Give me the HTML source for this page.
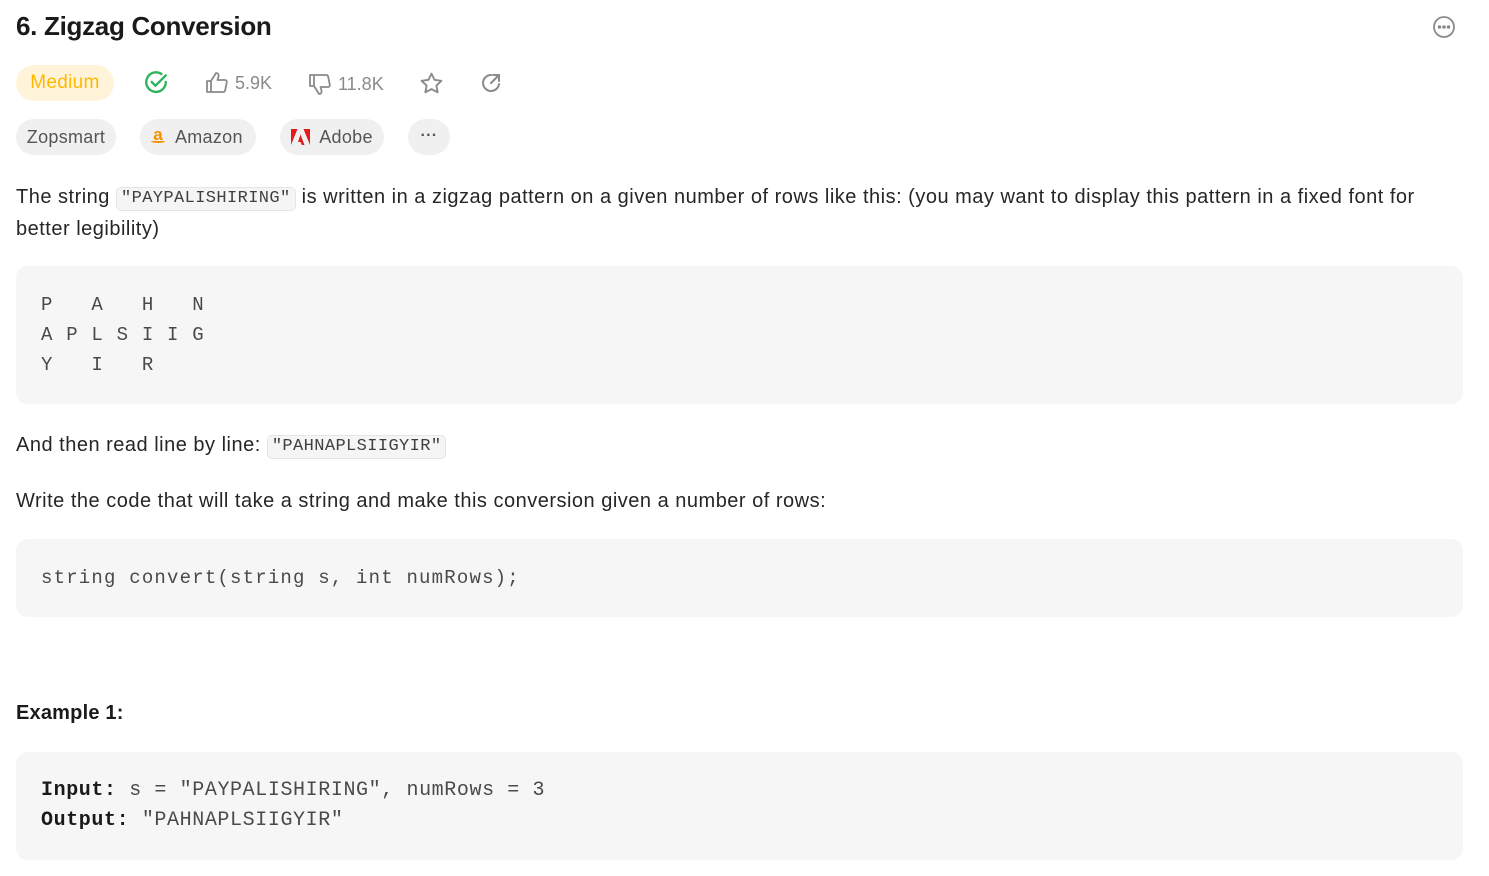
<!DOCTYPE html>
<html><head><meta charset="utf-8"><style>
*{box-sizing:border-box;margin:0;padding:0}
body{width:1489px;height:876px;overflow:hidden;background:#fff;font-family:"Liberation Sans",sans-serif;color:#262626;position:relative}
.abs{position:absolute}
h1{position:absolute;left:16px;top:11px;font-size:26px;font-weight:600;color:#1a1a1a;letter-spacing:-0.3px}
.pill{position:absolute;height:36px;border-radius:18px;background:#f0f0f0;display:flex;align-items:center;justify-content:center;font-size:18px;color:#555;letter-spacing:0.3px}
.stat{position:absolute;display:flex;align-items:center;gap:6px;font-size:18px;color:#8a8a8a}
p{position:absolute;left:16px;width:1430px;font-size:20px;line-height:32px;color:#262626;letter-spacing:0.5px}
code{font-family:"Liberation Mono",monospace;font-size:17px;line-height:20px;display:inline-block;background:#f5f5f5;border:1px solid #e5e5e5;border-radius:5px;padding:1px 4px;color:#404040;letter-spacing:0.4px;vertical-align:1px}
.blk{position:absolute;left:16px;width:1447px;background:#f6f6f6;border-radius:12px;padding-left:25px;font-family:"Liberation Mono",monospace;color:#4a4a4a;white-space:pre}
</style></head><body>
<h1>6. Zigzag Conversion</h1>
<svg class="abs" style="left:1432px;top:15px" width="24" height="24" viewBox="0 0 24 24" fill="none" stroke="#8a8a8a" stroke-width="1.8"><circle cx="12" cy="12" r="10"/><circle cx="7.5" cy="12" r=".9" fill="#8a8a8a"/><circle cx="12" cy="12" r=".9" fill="#8a8a8a"/><circle cx="16.5" cy="12" r=".9" fill="#8a8a8a"/></svg>

<div class="pill" style="left:16px;top:65px;width:98px;background:#fff4d9;color:#ffb800;font-size:19px">Medium</div>
<svg class="abs" style="left:143px;top:70px" width="26" height="26" viewBox="0 0 24 24" fill="none" stroke="#2db55d" stroke-width="2.2" stroke-linecap="round" stroke-linejoin="round"><path d="M21 11a9 9 0 1 1-4-7.3"/><path d="M8 11l3.5 3.5L21 5"/></svg>
<div class="stat" style="left:205px;top:71px"><svg width="24" height="24" viewBox="0 0 24 24" fill="none" stroke="#8a8a8a" stroke-width="1.8" stroke-linejoin="round"><path d="M2 10h4v11H2z"/><path d="M6 10l5-8c2 0 3 1.5 2.5 3.5L12.5 9H20c1.3 0 2 1 1.8 2.2l-1.6 8c-.2 1-1 1.8-2 1.8H6"/></svg>5.9K</div>
<div class="stat" style="left:308px;top:72px"><svg width="24" height="24" viewBox="0 0 24 24" fill="none" stroke="#8a8a8a" stroke-width="1.8" stroke-linejoin="round"><path d="M2 3h4v11H2z"/><path d="M6 14l5 8c2 0 3-1.5 2.5-3.5L12.5 15H20c1.3 0 2-1 1.8-2.2l-1.6-8C20 3.8 19.2 3 18.2 3H6"/></svg>11.8K</div>
<svg class="abs" style="left:419px;top:71px" width="25" height="25" viewBox="0 0 24 24" fill="none" stroke="#8a8a8a" stroke-width="1.8" stroke-linejoin="round"><path d="M12 2.5l2.9 6 6.6.9-4.8 4.6 1.2 6.5L12 17.4l-5.9 3.1 1.2-6.5L2.5 9.4l6.6-.9z"/></svg>
<svg class="abs" style="left:479px;top:71px" width="24" height="24" viewBox="0 0 24 24" fill="none" stroke="#8a8a8a" stroke-width="2" stroke-linecap="round"><path d="M20 13a8 8 0 1 1-8-9"/><path d="M14 4h6v6M20 4l-8 8"/></svg>

<div class="pill" style="left:16px;top:119px;width:100px">Zopsmart</div>
<div class="pill" style="left:140px;top:119px;width:116px;gap:12px"><span style="position:relative;color:#f29100;font-size:17px;font-weight:bold;top:-2px">a<span style="position:absolute;left:-2px;top:14px;width:14px;height:4px;border-bottom:2px solid #f29100;border-radius:0 0 50% 50%"></span></span>Amazon</div>
<div class="pill" style="left:280px;top:119px;width:104px;gap:9px"><svg width="19" height="16" viewBox="0 0 19 16"><path d="M0 0h6.5L0 16zM12.5 0H19v16zM9.5 5.5l4 10.5h-2.7l-1.2-3H7z" fill="#e21b1b"/></svg>Adobe</div>
<div class="pill" style="left:408px;top:119px;width:42px;font-weight:bold;font-size:16px;padding-bottom:2px">···</div>

<p style="top:181px">The string <code>"PAYPALISHIRING"</code> is written in a zigzag pattern on a given number of rows like this: (you may want to display this pattern in a fixed font for better legibility)</p>
<div class="blk" style="top:266px;height:138px;padding-top:24px;font-size:19px;line-height:30px;letter-spacing:1.2px">P   A   H   N
A P L S I I G
Y   I   R</div>
<p style="top:429px">And then read line by line: <code>"PAHNAPLSIIGYIR"</code></p>
<p style="top:485px">Write the code that will take a string and make this conversion given a number of rows:</p>
<div class="blk" style="top:539px;height:78px;padding-top:24px;font-size:19px;line-height:30px;letter-spacing:1.2px">string convert(string s, int numRows);</div>
<p style="top:697px;font-weight:bold;color:#1a1a1a;letter-spacing:0.2px">Example 1:</p>
<div class="blk" style="top:752px;height:108px;padding-top:24px;font-size:20px;line-height:30px;letter-spacing:0.6px"><b style="color:#1a1a1a">Input:</b> s = "PAYPALISHIRING", numRows = 3
<b style="color:#1a1a1a">Output:</b> "PAHNAPLSIIGYIR"</div>
</body></html>
